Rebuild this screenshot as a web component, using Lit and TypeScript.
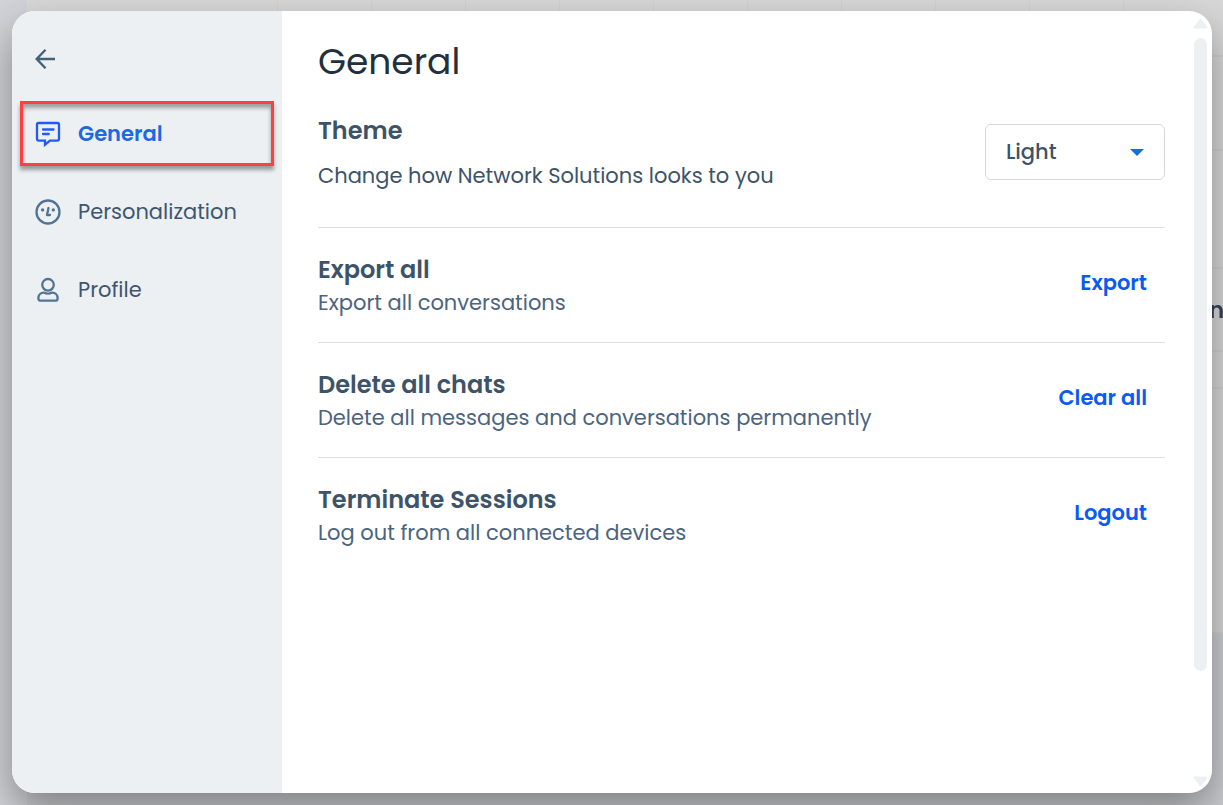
import { LitElement, html, css, svg } from "lit";
import { customElement } from "lit/decorators.js";
import { classMap } from "lit/directives/class-map.js";

const nav = [
  {
    label: "General", active: true,
    icon: svg`<path d="M3.500 2h19A1.500 1.500 0 0 1 24 3.500v14.600a1.500 1.500 0 0 1-1.500 1.500H15L10 23.700V19.600H3.500A1.500 1.500 0 0 1 2 18.100V3.500A1.500 1.500 0 0 1 3.500 2z"/><path d="M8 8.500h10.500M8 13h5.800" stroke-linecap="round"/>`,
  },
  {
    label: "Personalization", active: false,
    icon: svg`<circle cx="13" cy="13" r="11.500"/><path d="M13.500 9l-1.500 7h3" stroke-linecap="round" stroke-linejoin="round"/><circle cx="7.600" cy="10.900" r="1.700" fill="currentColor" stroke="none"/><circle cx="18.300" cy="10.900" r="1.700" fill="currentColor" stroke="none"/>`,
  },
  {
    label: "Profile", active: false,
    icon: svg`<circle cx="13" cy="7.800" r="5.800"/><path d="M9 15.600c2.500 1.300 5.500 1.300 8 0 3.600 0 5.600 2.500 5.600 5.400 0 1.800-.5 2.700-1.700 2.700H5.100c-1.200 0-1.700-.9-1.700-2.700 0-2.900 2-5.400 5.600-5.400z" stroke-linejoin="round"/>`,
  },
];

const rows = [
  { title: "Export all", text: "Export all conversations", action: "Export" },
  { title: "Delete all chats", text: "Delete all messages and conversations permanently", action: "Clear all" },
  { title: "Terminate Sessions", text: "Log out from all connected devices", action: "Logout" },
];

@customElement("app-root")
export class AppRoot extends LitElement {
  static styles = css`
    :host {
      display: block;
      width: 1223px;
      height: 805px;
      font-family: Poppins, Inter, sans-serif;
      color: #3d5368;
    }
    * { box-sizing: border-box; }
    .page { position: relative; height: 805px; overflow: hidden; }
    .backdrop {
      height: 100%;
      display: grid;
      grid-template-columns: 27px 1fr 14px;
      background: #d7d7d7;
    }
    .rail { background: #d1d3d8; }
    .table {
      background:
        linear-gradient(rgba(205,206,209,0) 80%, #cdced1 90%),
        linear-gradient(90deg, #d8d8d8 246px, rgba(216,216,216,0) 246px),
        repeating-linear-gradient(90deg, #d2d2d3 0 1.500px, #d8d8d8 1.500px 94px) 62px 0;
    }
    .edge { display: flex; flex-direction: column; }
    .cell { border-bottom: 2px solid #cfd0d2; }
    .c1 { height: 57px; }
    .c2 { height: 94px; }
    .c3 { height: 118px; }
    .c4 {
      height: 83px;
      padding-top: 23px;
      font-size: 23px;
      line-height: 36px;
      font-weight: 600;
      color: #33465a;
      filter: blur(.7px);
    }
    .c5 { height: 37px; }
    .c6 { height: 245px; }
    .c7 { flex: 1; background: #cccdd1; }
    .dialog {
      position: absolute;
      left: 12px;
      top: 11px;
      width: 1200px;
      height: 782px;
      display: flex;
      border-radius: 23px;
      box-shadow: 0 18px 40px rgba(0, 0, 0, .37);
    }
    .surface {
      flex: 1;
      display: flex;
      background: #fff;
      border-radius: 23px;
      overflow: hidden;
    }
    .sidebar {
      width: 270px;
      background: #ecf0f3;
      padding: 36px 8px 0;
    }
    .back {
      display: block;
      width: 24px;
      height: 24px;
      margin: 0 0 30px 13px;
      color: #46607c;
    }
    .nav { display: flex; flex-direction: column; gap: 13px; }
    .item {
      height: 65px;
      display: flex;
      align-items: center;
      gap: 17px;
      padding-left: 15px;
      font-size: 21px;
      line-height: 32px;
      color: #3f566e;
    }
    .item svg { width: 26px; height: 26px; color: #527394; }
    .item.active {
      border: 3px solid #fc4143;
      padding-left: 12px;
      font-weight: 600;
      color: #1c6adf;
      box-shadow: 0 4px 4px rgba(0,0,0,.36), inset 0 4px 4px rgba(0,0,0,.34);
    }
    .item.active svg { color: #2259ff; }
    .main { flex: 1; padding: 24px 29px 0 36px; }
    h1 {
      margin: 0 0 25px;
      font-size: 36px;
      line-height: 54px;
      font-weight: 400;
      color: #22303e;
    }
    .row {
      height: 115px;
      display: flex;
      justify-content: space-between;
      border-bottom: 1px solid #dedfe0;
      padding-top: 25px;
    }
    .row:last-child { border-bottom: 0; }
    .theme { height: 114px; padding-top: 0; }
    .theme .title { margin-bottom: 12px; }
    .theme .text { color: #3d5368; }
    .copy { white-space: nowrap; }
    .title { font-size: 24px; line-height: 34px; font-weight: 600; }
    .text { font-size: 21px; line-height: 32px; color: #4b6480; }
    .action {
      margin: 14px 18px 0 0;
      font-size: 21px;
      line-height: 32px;
      font-weight: 600;
      color: #0b5bf0;
    }
    .select {
      width: 180px;
      height: 56px;
      margin-top: 10px;
      border: 1px solid #d5d8db;
      border-radius: 6px;
      display: flex;
      align-items: center;
      justify-content: space-between;
      padding: 0 20px 1px;
      font-size: 21px;
      line-height: 32px;
      font-weight: 500;
    }
    .caret { width: 14px; height: 7px; margin-top: 2px; }
    .scroll {
      width: 19px;
      padding: 7px 5px 5px 0;
      margin-left: -1px;
      display: flex;
      flex-direction: column;
      align-items: center;
    }
    .arrow { width: 15px; height: 11px; color: #ecf0f3; }
    .thumb { width: 13px; height: 633px; margin: 9px 0 105px; border-radius: 7px; background: #ecf0f3; }
  `;

  render() {
    return html`
      <div class="page">
        <div class="backdrop">
          <div class="rail"></div>
          <div class="table"></div>
          <div class="edge">
            <div class="cell c1"></div>
            <div class="cell c2"></div>
            <div class="cell c3"></div>
            <div class="cell c4">n</div>
            <div class="cell c5"></div>
            <div class="cell c6"></div>
            <div class="c7"></div>
          </div>
        </div>
        <div class="dialog">
          <div class="surface">
            <aside class="sidebar">
              <svg class="back" viewBox="0 0 24 24" fill="none" stroke="currentColor" stroke-width="2.400">
                <path d="M22 12H3.500M12.500 2.700L3.700 12l8.800 9.300" />
              </svg>
              <nav class="nav">
                ${nav.map((n) => html`
                  <div class=${classMap({ item: true, active: n.active })}>
                    <svg viewBox="0 0 26 26" fill="none" stroke="currentColor" stroke-width="2.300">${n.icon}</svg>
                    <span>${n.label}</span>
                  </div>`)}
              </nav>
            </aside>
            <main class="main">
              <h1>General</h1>
              <section class="row theme">
                <div class="copy">
                  <div class="title">Theme</div>
                  <div class="text">Change how Network Solutions looks to you</div>
                </div>
                <div class="select">
                  <span>Light</span>
                  <svg class="caret" viewBox="0 0 14 7"><path d="M0 0h14L7 7z" fill="#1a6be0" /></svg>
                </div>
              </section>
              ${rows.map((r) => html`
                <section class="row">
                  <div class="copy">
                    <div class="title">${r.title}</div>
                    <div class="text">${r.text}</div>
                  </div>
                  <div class="action">${r.action}</div>
                </section>`)}
            </main>
            <div class="scroll">
              <svg class="arrow" viewBox="0 0 15 11"><path d="M7.500 1.500L13.500 9.500h-12z" fill="currentColor" stroke="currentColor" stroke-width="2" stroke-linejoin="round" /></svg>
              <div class="thumb"></div>
              <svg class="arrow" viewBox="0 0 15 11"><path d="M7.500 9.500L1.500 1.500h12z" fill="currentColor" stroke="currentColor" stroke-width="2" stroke-linejoin="round" /></svg>
            </div>
          </div>
        </div>
      </div>`;
  }
}
